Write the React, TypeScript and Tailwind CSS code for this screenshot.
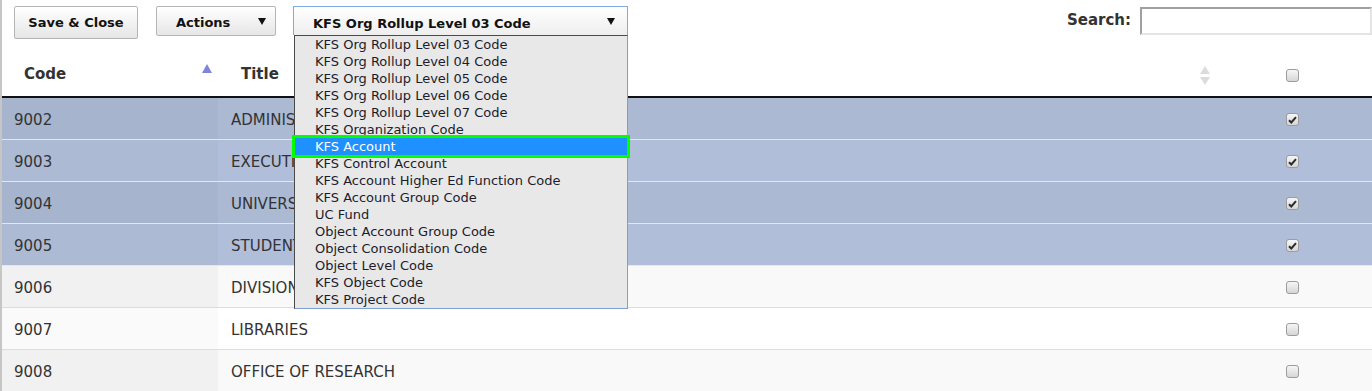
import React from 'react';

const options = [
  'KFS Org Rollup Level 03 Code',
  'KFS Org Rollup Level 04 Code',
  'KFS Org Rollup Level 05 Code',
  'KFS Org Rollup Level 06 Code',
  'KFS Org Rollup Level 07 Code',
  'KFS Organization Code',
  'KFS Account',
  'KFS Control Account',
  'KFS Account Higher Ed Function Code',
  'KFS Account Group Code',
  'UC Fund',
  'Object Account Group Code',
  'Object Consolidation Code',
  'Object Level Code',
  'KFS Object Code',
  'KFS Project Code',
];

const rows = [
  { code: '9002', title: 'ADMINISTRATION', selected: true },
  { code: '9003', title: 'EXECUTIVE VICE CHANCELLOR', selected: true },
  { code: '9004', title: 'UNIVERSITY RELATIONS', selected: true },
  { code: '9005', title: 'STUDENT AFFAIRS', selected: true },
  { code: '9006', title: 'DIVISION OF HEALTH SCIENCES', selected: false },
  { code: '9007', title: 'LIBRARIES', selected: false },
  { code: '9008', title: 'OFFICE OF RESEARCH', selected: false },
];

function Checkbox({ checked }: { checked?: boolean }) {
  return (
    <span className="w-[13px] h-[13px] rounded-[3px] border border-[#9c9c9c] bg-gradient-to-b from-[#f6f6f6] to-[#d6d6d6] flex items-center justify-center">
      {checked && (
        <svg width="9" height="8" viewBox="0 0 9 8">
          <path d="M1 4.2 L3.3 6.5 L8 1.2" stroke="#2b2b2b" strokeWidth="2" fill="none" />
        </svg>
      )}
    </span>
  );
}

function Caret() {
  return (
    <svg width="8" height="7" viewBox="0 0 8 7">
      <polygon points="0,0 8,0 4,7" fill="#111" />
    </svg>
  );
}

export default function App() {
  return (
    <div className="w-[1372px] h-[391px] overflow-hidden bg-white border-l-2 border-[#c6c6c6] font-['DejaVu_Sans',Verdana,sans-serif] text-[#333]">
      {/* toolbar */}
      <div className="h-[40px] flex items-start pt-[6px]">
        <button className="ml-[12px] w-[124px] h-[33px] pt-[1px] rounded-[2px] border border-[#b5b5b5] bg-gradient-to-b from-white to-[#e6e6e6] text-[13px] font-bold text-[#111]">
          Save &amp; Close
        </button>
        <button className="ml-[18px] w-[120px] h-[30px] rounded-[2px] border border-[#b5b5b5] bg-gradient-to-b from-white to-[#e6e6e6] text-[13px] font-bold text-[#111] flex items-center pl-[19px] pr-[9px] justify-between">
          <span className="mt-[4px]">Actions</span>
          <Caret />
        </button>
        <div className="relative ml-[17px] w-[335px]">
          <div className="h-[29px] border border-b-0 border-[#7fabe3] bg-gradient-to-b from-white to-[#eeeeee] flex items-center justify-between pl-[19px] pr-[12px] text-[13px] font-bold text-[#111]">
            <span className="mt-[6px]">KFS Org Rollup Level 03 Code</span>
            <Caret />
          </div>
          <ul className="absolute top-[29px] left-[1px] w-[334px] z-10 bg-[#e8e8e8] border-t border-l border-[#4a4a4a] border-r border-b border-r-[#7f9fd0] border-b-[#7f9fd0]">
            {options.map((o) => (
              <li
                key={o}
                className={
                  o === 'KFS Account'
                    ? 'h-[17px] leading-[17px] pl-[20px] text-[13px] bg-[#1e90ff] text-white outline-[3px] outline-solid outline-[#00ff00]'
                    : 'h-[17px] leading-[17px] pl-[20px] text-[13px] text-[#1c1c2c]'
                }
              >
                {o}
              </li>
            ))}
          </ul>
        </div>
        <div className="ml-auto flex items-center h-[29px]">
          <span className="text-[15px] font-bold text-[#333] mr-[9px]">Search:</span>
          <input className="w-[232px] h-[28px] border-2 border-[#a0a0a0] border-b-[#e4e4e4] border-r-[#e4e4e4] bg-white outline-none" />
        </div>
      </div>

      {/* header */}
      <div className="h-[58px] grid grid-cols-[216px_1010px_1fr] border-b-2 border-[#111] text-[15px] font-bold text-[#333] pt-[13px]">
        <div className="flex items-center justify-between pl-[22px] pr-[6px]">
          <span>Code</span>
          <svg width="10" height="9" viewBox="0 0 10 9" className="mb-[12px]">
            <polygon points="5,0 10,9 0,9" fill="#7f85dc" />
          </svg>
        </div>
        <div className="flex items-center justify-between pl-[23px] pr-[18px]">
          <span>Title</span>
          <svg width="10" height="20" viewBox="0 0 10 20" className="mt-[2px]">
            <polygon points="5,0 10,8 0,8" fill="#dcdcdc" />
            <polygon points="0,11 10,11 5,19" fill="#dcdcdc" />
          </svg>
        </div>
        <div className="flex items-center pl-[58px] mt-[2px]">
          <Checkbox />
        </div>
      </div>

      {/* rows */}
      {rows.map((r, i) => {
        const odd = i % 2 === 0;
        const rowBg = r.selected ? (odd ? 'bg-[#abb9d3]' : 'bg-[#b0bed9]') : odd ? 'bg-[#f9f9f9]' : 'bg-white';
        const sortBg = r.selected ? (odd ? 'bg-[#a6b4cd]' : 'bg-[#acbad4]') : odd ? 'bg-[#f1f1f1]' : 'bg-[#fafafa]';
        const line = r.selected ? 'border-[#e2e6ee]' : 'border-[#dddddd]';
        return (
          <div key={r.code} className={`h-[42px] grid grid-cols-[216px_1010px_1fr] border-b ${line} ${rowBg} text-[15px] text-[#333]`}>
            <div className={`flex items-center pl-[12px] pt-[3px] ${sortBg}`}>{r.code}</div>
            <div className="flex items-center pl-[13px] pt-[3px]">{r.title}</div>
            <div className="flex items-center pl-[58px] pt-[2px]">
              <Checkbox checked={r.selected} />
            </div>
          </div>
        );
      })}
    </div>
  );
}
